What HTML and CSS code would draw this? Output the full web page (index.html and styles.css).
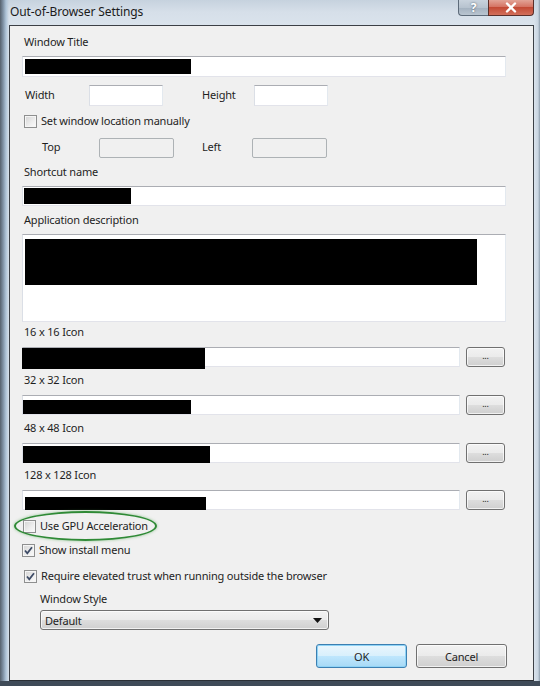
FILE: index.html
```html
<!DOCTYPE html>
<html>
<head>
<meta charset="utf-8">
<link rel="stylesheet" href="styles.css">
</head>
<body>
<div class="window">
  <div class="titlebar">
    <span class="title">Out-of-Browser Settings</span>
    <div class="caps">
      <div class="cap help">?</div>
      <div class="cap close">
        <svg width="14" height="11" viewBox="0 0 14 11"><path d="M3 1.5 L11 9.5 M11 1.5 L3 9.5" stroke="#fff" stroke-width="2.4" stroke-linecap="round"/></svg>
      </div>
    </div>
  </div>
  <div class="client">
    <div class="lbl l1">Window Title</div>
    <div class="field f1"><div class="redact r1"></div></div>

    <div class="pair wh">
      <span class="plbl">Width</span>
      <div class="field small"></div>
      <span class="plbl">Height</span>
      <div class="field small"></div>
    </div>

    <div class="check c1"><span class="box"></span><span>Set window location manually</span></div>

    <div class="pair tl">
      <span class="plbl">Top</span>
      <div class="field small dis"></div>
      <span class="plbl">Left</span>
      <div class="field small dis"></div>
    </div>

    <div class="lbl l2">Shortcut name</div>
    <div class="field f2"><div class="redact r2"></div></div>

    <div class="lbl l2">Application description</div>
    <div class="field area"><div class="redact r3"></div></div>

    <div class="lbl l3">16 x 16 Icon</div>
    <div class="irow"><div class="field ifield"><div class="redact r4"></div></div><div class="btn dots">...</div></div>

    <div class="lbl l4">32 x 32 Icon</div>
    <div class="irow"><div class="field ifield"><div class="redact r5"></div></div><div class="btn dots">...</div></div>

    <div class="lbl l4">48 x 48 Icon</div>
    <div class="irow"><div class="field ifield"><div class="redact r6"></div></div><div class="btn dots">...</div></div>

    <div class="lbl l5">128 x 128 Icon</div>
    <div class="irow"><div class="field ifield"><div class="redact r7"></div></div><div class="btn dots">...</div></div>

    <div class="check c2"><span class="box"></span><span>Use GPU Acceleration</span><div class="ring"></div></div>
    <div class="check c3"><span class="box"><svg width="11" height="11" viewBox="0 0 11 11"><path d="M2 5.5 L4.3 8.3 L9 2.3" fill="none" stroke="#3d4b66" stroke-width="1.8"/></svg></span><span>Show install menu</span></div>
    <div class="check c4"><span class="box"><svg width="11" height="11" viewBox="0 0 11 11"><path d="M2 5.5 L4.3 8.3 L9 2.3" fill="none" stroke="#3d4b66" stroke-width="1.8"/></svg></span><span>Require elevated trust when running outside the browser</span></div>

    <div class="lbl l6">Window Style</div>
    <div class="select"><span>Default</span><svg width="9" height="5" viewBox="0 0 9 5"><path d="M0 0 H9 L4.5 5 Z" fill="#111"/></svg></div>

    <div class="actions">
      <div class="btn big ok">OK</div>
      <div class="btn big">Cancel</div>
    </div>
  </div>
</div>
</body>
</html>
```
FILE: styles.css
```css
html, body { margin: 0; padding: 0; }
body {
  font-family: "Noto Sans", "Open Sans", sans-serif;
  font-size: 11px;
  letter-spacing: -0.18px;
  color: #1e1e1e;
  width: 540px;
  height: 686px;
  overflow: hidden;
}
.window {
  width: 540px;
  height: 686px;
  display: flex;
  flex-direction: column;
  background:
    linear-gradient(to right, #56616d 0, #7d8fa2 3px, #aec3d7 6px, rgba(200,214,228,0) 9px),
    linear-gradient(to left, #8c9cab 0, #c9d5e1 2px, rgba(220,229,238,0) 6px),
    linear-gradient(to bottom, #c6d2de 0, #d6dfe9 12px, #dae3ec 25px, #d9e2eb 100%);
  box-sizing: border-box;
  border-bottom: 5px solid #3f4b58;
}
.titlebar {
  height: 25px;
  display: flex;
  align-items: flex-start;
  justify-content: space-between;
  flex-shrink: 0;
}
.title {
  margin-left: 10px;
  margin-top: 3px;
  font-size: 12px;
  letter-spacing: -0.1px;
  color: #1b1b1b;
}
.caps {
  display: flex;
  margin-right: 6px;
}
.cap {
  height: 16px;
  box-sizing: border-box;
  border: 1px solid #5d6b7a;
  border-top: none;
  display: flex;
  align-items: center;
  justify-content: center;
}
.help {
  width: 30px;
  border-radius: 0 0 0 4px;
  border-right: none;
  background: linear-gradient(to bottom, #c9d3dd 0, #b7c3cf 50%, #a3b1bf 51%, #b9c5d1 100%);
  color: #fff;
  font-weight: bold;
  font-size: 12px;
  text-shadow: 0 0 2px #41505e;
}
.close {
  width: 46px;
  border-radius: 0 0 4px 0;
  background: linear-gradient(to bottom, #e2a396 0, #d57464 45%, #c34a35 50%, #d2705c 100%);
  border-color: #5a2f2a;
}
.client {
  flex: 1;
  margin: 0 6px 0 9px;
  border: 1px solid #3c4046;
  border-bottom-color: #2a2f35;
  background: #f0f0f0;
  padding: 0 27px 0 12px;
  display: flex;
  flex-direction: column;
}
.lbl { height: 16px; line-height: 16px; padding-left: 2px; }
.l1 { margin-top: 8px; }
.l2 { margin-top: 6px; }
.l3 { margin-top: 2px; }
.l4 { margin-top: 5px; }
.l5 { margin-top: 4px; }
.l6 { margin-top: 7px; padding-left: 18px; }

.field {
  box-sizing: border-box;
  background: #fff;
  border: 1px solid #e2e3ea;
  border-top-color: #abadb3;
  border-left-color: #dbdfe6;
  border-right-color: #e3e9ef;
  height: 20px;
}
.f1 { margin-top: 6px; height: 21px; }
.f2 { margin-top: 6px; }
.area { margin-top: 6px; height: 88px; }
.redact { background: #000; }
.r1 { width: 166px; height: 15px; margin: 2px 0 0 2px; }
.r2 { width: 107px; height: 16px; margin: 1px 0 0 1px; }
.r3 { width: 452px; height: 46px; margin: 4px 0 0 2px; }
.r4 { width: 183px; height: 21px; margin: 0 0 0 -1px; }
.r5 { width: 168px; height: 14px; margin: 4px 0 0 0; }
.r6 { width: 187px; height: 17px; margin: 2px 0 0 0; }
.r7 { width: 181px; height: 13px; margin: 6px 0 0 2px; }

.pair {
  display: grid;
  align-items: center;
}
.plbl { padding-bottom: 3px; }
.wh {
  margin-top: 8px;
  height: 21px;
  grid-template-columns: 67px 113px 52px 74px;
}
.wh .plbl:first-child { padding-left: 3px; }
.wh .small { width: 74px; height: 21px; }
.tl {
  margin-top: 9px;
  height: 20px;
  grid-template-columns: 77px 103px 50px 75px;
}
.tl .plbl:first-child { padding-left: 20px; }
.small { width: 75px; }
.dis {
  background: #f0f0f0;
  border: 1px solid #adb2b5;
  border-radius: 2px;
}

.check {
  position: relative;
  display: flex;
  align-items: center;
  height: 16px;
  gap: 4px;
}
.check > span:last-of-type { line-height: 16px; }
.box {
  width: 13px;
  height: 13px;
  box-sizing: border-box;
  border: 1px solid #8e8f8f;
  background: linear-gradient(135deg, #d3d3d3 0, #eeeeee 60%, #fbfbfb 100%);
  box-shadow: inset 0 0 0 1px #f5f5f5;
  margin-left: 2px;
  display: flex;
  align-items: center;
  justify-content: center;
}
.c1 { margin-top: 7px; }
.c2 { margin-top: 8px; }
.c3 { margin-top: 8px; }
.c4 { margin-top: 10px; }
.c2 .box { margin-left: 1px; }
.c3 .box { margin-left: 0; }
.ring {
  position: absolute;
  left: -8px;
  top: -7px;
  width: 139px;
  height: 26px;
  border: 2px solid #2f8a36;
  border-radius: 50%;
  box-shadow: 0 0 3px rgba(80, 170, 80, 0.6);
}

.irow {
  margin-top: 7px;
  display: flex;
  gap: 6px;
  height: 20px;
}
.ifield { width: 438px; }
.btn {
  box-sizing: border-box;
  border: 1px solid #707070;
  border-radius: 3px;
  background: linear-gradient(to bottom, #f2f2f2 0, #ebebeb 48%, #dddddd 52%, #cfcfcf 100%);
  box-shadow: inset 0 0 0 1px rgba(255,255,255,0.7);
  display: flex;
  align-items: center;
  justify-content: center;
}
.dots {
  width: 39px;
  height: 20px;
  font-size: 9px;
  line-height: 1;
  padding-bottom: 3px;
}

.select {
  margin-top: 3px;
  margin-left: 18px;
  width: 289px;
  height: 20px;
  box-sizing: border-box;
  border: 1px solid #707070;
  border-radius: 3px;
  background: linear-gradient(to bottom, #f2f2f2 0, #ebebeb 48%, #dddddd 52%, #cfcfcf 100%);
  box-shadow: inset 0 0 0 1px rgba(255,255,255,0.7);
  display: flex;
  align-items: center;
  justify-content: space-between;
  padding: 0 6px 0 4px;
}

.actions {
  margin-top: 14px;
  display: flex;
  justify-content: flex-end;
  gap: 9px;
  margin-right: -1px;
}
.big {
  width: 91px;
  height: 24px;
  font-size: 11px;
}
.ok {
  border-color: #3c7fb1;
  background: linear-gradient(to bottom, #eaf6fd 0, #d9f0fc 48%, #bee6fd 52%, #a7d9f5 100%);
  box-shadow: inset 0 0 0 1px #8fd3f6;
}
```
